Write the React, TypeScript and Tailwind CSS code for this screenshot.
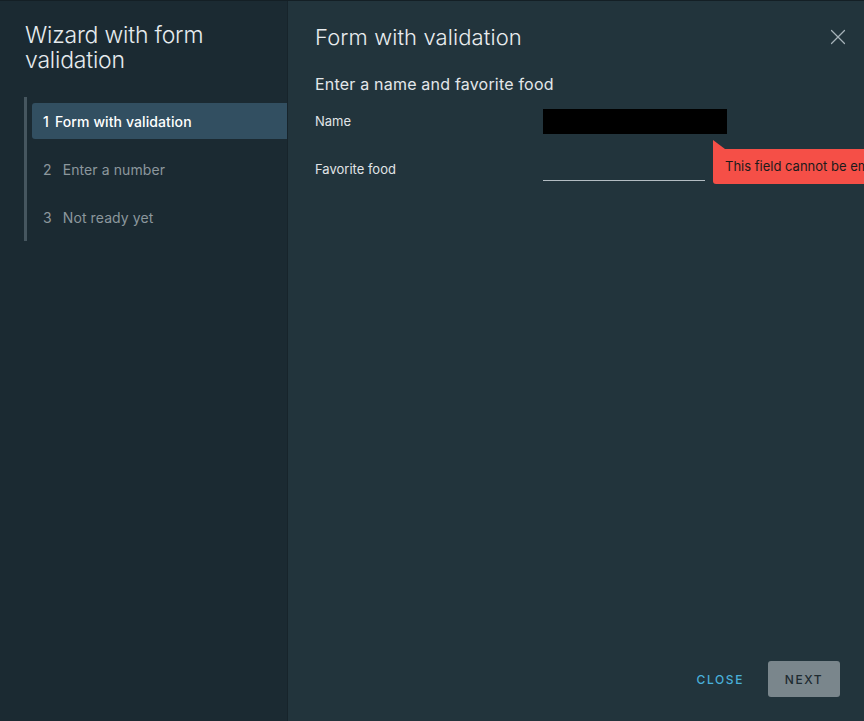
import { X } from 'lucide-react';

const steps = [
  { n: 1, label: 'Form with validation', active: true },
  { n: 2, label: 'Enter a number', active: false },
  { n: 3, label: 'Not ready yet', active: false },
];

export default function App() {
  return (
    <div
      className="flex h-[721px] w-[864px] overflow-hidden border-t border-[#141f25] text-[#e9ecef]"
      style={{ fontFamily: 'Inter, "Noto Sans", sans-serif' }}
    >
      {/* left nav */}
      <aside className="flex w-[288px] shrink-0 flex-col border-r border-[#17242b] bg-[#1b2a32] pl-6">
        <h1 className="mt-[22px] pl-px text-[23px] leading-[25px] font-light tracking-[-0.2px] text-[#e6ebee]">
          Wizard with form validation
        </h1>
        <nav className="mt-[24px] flex flex-col gap-3 border-l-[3px] border-[#46565f] py-1.5 pl-[5px]">
          {steps.map((s) => (
            <div
              key={s.n}
              className={`flex h-9 items-center rounded-l-[3px] pl-[11px] text-[14px] tracking-[0.1px] ${
                s.active ? 'bg-[#324f61] font-medium text-white' : 'text-[#8c979d]'
              }`}
            >
              <span className={s.active ? 'mr-1.5' : 'mr-[11px]'}>{s.n}</span>
              {s.label}
            </div>
          ))}
        </nav>
      </aside>

      {/* content */}
      <main className="relative flex flex-1 flex-col bg-[#22343c] pl-[27px]">
        <div className="flex items-center justify-between pt-[22px] pr-[13px]">
          <h2 className="text-[22px] leading-7 font-light tracking-[0.1px] text-[#e9ecef]">Form with validation</h2>
          <X size={26} className="text-[#a6b2b9]" strokeWidth={1.1} />
        </div>

        <h3 className="mt-[21px] text-[16px] leading-6 tracking-[0.2px] text-[#e3e7ea]">
          Enter a name and favorite food
        </h3>

        <div className="mt-[13px] flex flex-col">
          <div className="flex h-[25px] items-center">
            <label className="w-[228px] text-[13px] text-[#e0e4e7]">Name</label>
            <div className="h-[25px] w-[184px] bg-black" />
          </div>
          <div className="mt-[22px] flex h-[25px] items-center">
            <label className="w-[228px] pt-0.5 text-[13px] text-[#e0e4e7]">Favorite food</label>
            <div className="relative h-[25px] w-[162px] border-b border-[#b3bcc2]">
              <div className="absolute top-[-16px] left-[170px] flex h-[44px] w-[200px] flex-col">
                <div className="h-[9px] w-[12px] bg-[#f54f47] [clip-path:polygon(0_0,100%_100%,0_100%)]" />
                <div className="flex h-[35px] items-center rounded-b-[3px] rounded-tr-[3px] bg-[#f54f47] pl-3 text-[13px] whitespace-nowrap text-[#1b1b1b]">
                  This field cannot be empty
                </div>
              </div>
            </div>
          </div>
        </div>

        <div className="mt-auto mb-6 flex items-center justify-end gap-6 pr-6">
          <button className="pt-0.5 text-[12px] font-medium tracking-[1.6px] text-[#49afd9]">CLOSE</button>
          <button className="h-9 w-[72px] rounded-[3px] bg-[#7a868c] pt-0.5 text-[12px] font-medium tracking-[1.6px] text-[#1e2b31]">
            NEXT
          </button>
        </div>
      </main>
    </div>
  );
}
